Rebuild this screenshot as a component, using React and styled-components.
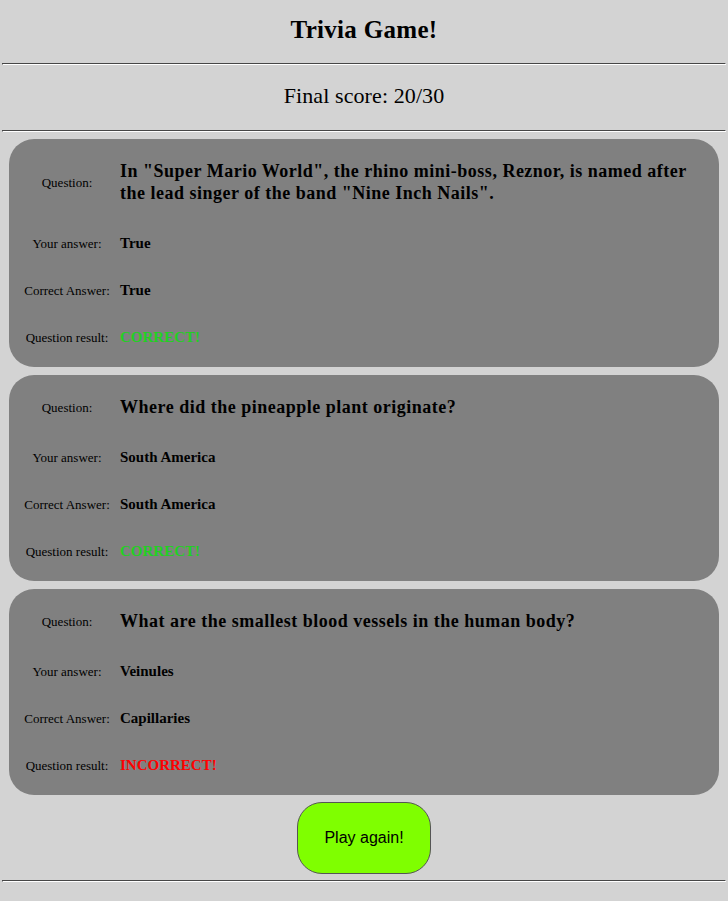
import React from "react";
import styled, { createGlobalStyle } from "styled-components";

const GlobalStyle = createGlobalStyle`
  html, body {
    margin: 0;
    padding: 0;
    background: #d3d3d3;
  }
  body {
    font-family: "Liberation Serif", "Times New Roman", serif;
  }
`;

// 페이지 전체
const Page = styled.div`
  padding: 0 2px;
  min-height: 901px;
  box-sizing: border-box;
`;

// 'Trivia Game!' 제목
const Title = styled.h2`
  margin: 0;
  padding: 16px 0;
  font-size: 25px;
  line-height: 28px;
  font-weight: 700;
  letter-spacing: 0.3px;
  text-align: center;
`;

const Line = styled.hr`
  margin: 3px 0;
  border: 1px inset #eee;
  border-color: #9a9a9a #fff #fff #9a9a9a;
  height: 0;
`;

// 최종 점수
const Score = styled.div`
  padding: 16px 0 19px;
  font-size: 22px;
  line-height: 24px;
  letter-spacing: 0.1px;
  text-align: center;
`;

const CardList = styled.div`
  display: flex;
  flex-direction: column;
  gap: 8px;
  padding: 4px 7px 0;
`;

// 문제 하나 카드
const Card = styled.div`
  background: #808080;
  border-radius: 25px;
  padding: 6px 10px 6px 8px;
  display: grid;
  grid-template-columns: 100px 1fr;
  column-gap: 3px;
  align-items: center;
`;

const Label = styled.div`
  font-size: 13px;
  line-height: 17px;
  text-align: center;
  padding: ${(p) => (p.$question ? "15px 0 16px" : "15px 0")};
`;

const Value = styled.div`
  font-weight: 700;
  font-size: ${(p) => (p.$question ? "18px" : "15px")};
  line-height: ${(p) => (p.$question ? "22px" : "17px")};
  letter-spacing: ${(p) => (p.$question ? "0.5px" : "0")};
  padding: ${(p) => (p.$question ? "15px 0 16px" : "15px 0")};
  color: ${(p) => p.$color || "#000"};
`;

const Footer = styled.div`
  display: flex;
  justify-content: center;
  padding-top: 7px;
  padding-bottom: 3px;
`;

const PlayButton = styled.button`
  background: #7fff00;
  border: 1px solid #555;
  border-radius: 25px;
  padding: 26px 26px;
  font-family: "Liberation Sans", Arial, sans-serif;
  font-size: 16px;
  line-height: 18px;
  color: #000;
  cursor: pointer;
`;

const results = [
  {
    question:
      'In "Super Mario World", the rhino mini-boss, Reznor, is named after the lead singer of the band "Nine Inch Nails".',
    answer: "True",
    correct: "True",
  },
  {
    question: "Where did the pineapple plant originate?",
    answer: "South America",
    correct: "South America",
  },
  {
    question: "What are the smallest blood vessels in the human body?",
    answer: "Veinules",
    correct: "Capillaries",
  },
];

const App = () => {
  return (
    <>
      <GlobalStyle />
      <Page>
        <Title>Trivia Game!</Title>
        <Line />
        <Score>Final score: 20/30</Score>
        <Line />
        <CardList>
          {results.map((r, i) => {
            const ok = r.answer === r.correct;
            return (
              <Card key={i}>
                <Label $question>Question:</Label>
                <Value $question>{r.question}</Value>
                <Label>Your answer:</Label>
                <Value>{r.answer}</Value>
                <Label>Correct Answer:</Label>
                <Value>{r.correct}</Value>
                <Label>Question result:</Label>
                <Value $color={ok ? "#22d022" : "#ff0000"}>
                  {ok ? "CORRECT!" : "INCORRECT!"}
                </Value>
              </Card>
            );
          })}
        </CardList>
        <Footer>
          <PlayButton>Play again!</PlayButton>
        </Footer>
        <Line />
      </Page>
    </>
  );
};

export default App;
